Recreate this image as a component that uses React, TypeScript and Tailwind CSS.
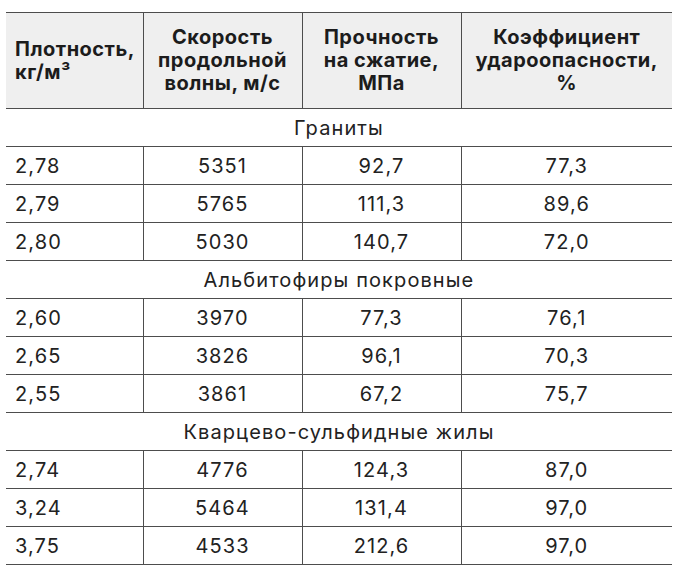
import React from 'react';

type Row = [string, string, string, string];

interface Section {
    title: string;
    rows: Row[];
}

const sections: Section[] = [
    {
        title: 'Граниты',
        rows: [
            ['2,78', '5351', '92,7', '77,3'],
            ['2,79', '5765', '111,3', '89,6'],
            ['2,80', '5030', '140,7', '72,0'],
        ],
    },
    {
        title: 'Альбитофиры покровные',
        rows: [
            ['2,60', '3970', '77,3', '76,1'],
            ['2,65', '3826', '96,1', '70,3'],
            ['2,55', '3861', '67,2', '75,7'],
        ],
    },
    {
        title: 'Кварцево-сульфидные жилы',
        rows: [
            ['2,74', '4776', '124,3', '87,0'],
            ['3,24', '5464', '131,4', '97,0'],
            ['3,75', '4533', '212,6', '97,0'],
        ],
    },
];

// inner grid lines only, no outer left/right edges
const cell = 'border-y border-x border-[#4d4d4d] h-[38px] p-0 align-middle';

const App: React.FC = () => {
    return (
        <div className="w-[679px] h-[569px] bg-white pt-3 px-[6px] font-['Inter','Noto_Sans',sans-serif] text-[#222222]">
            <table className="w-[666px] border-collapse table-fixed">
                <colgroup>
                    <col className="w-[137px]" />
                    <col className="w-[159px]" />
                    <col className="w-[159px]" />
                    <col className="w-[211px]" />
                </colgroup>
                <thead>
                    <tr className="bg-[#efefef] h-[96px] text-[20px] font-bold leading-[23px] tracking-[0.5px] text-[#1c1c1c]">
                        <th className="border border-l-0 border-[#4d4d4d] text-left pl-[9px] pr-0 align-middle">
                            Плотность,<br />кг/м³
                        </th>
                        <th className="border border-[#4d4d4d] text-center align-middle px-0">
                            Скорость<br />продольной<br />волны, м/с
                        </th>
                        <th className="border border-[#4d4d4d] text-center align-middle px-0">
                            Прочность<br />на сжатие,<br />МПа
                        </th>
                        <th className="border border-r-0 border-[#4d4d4d] text-center align-middle px-0">
                            Коэффициент<br />удароопасности,<br />%
                        </th>
                    </tr>
                </thead>
                <tbody className="text-[20px] tracking-[1.1px]">
                    {sections.map((s) => (
                        <React.Fragment key={s.title}>
                            <tr>
                                <td colSpan={4} className={`${cell} border-x-0 text-center`}>
                                    {s.title}
                                </td>
                            </tr>
                            {s.rows.map((r) => (
                                <tr key={r[0] + r[1]}>
                                    <td className={`${cell} border-l-0 text-left pl-[9px]`}>{r[0]}</td>
                                    <td className={`${cell} text-center`}>{r[1]}</td>
                                    <td className={`${cell} text-center`}>{r[2]}</td>
                                    <td className={`${cell} border-r-0 text-center`}>{r[3]}</td>
                                </tr>
                            ))}
                        </React.Fragment>
                    ))}
                </tbody>
            </table>
        </div>
    );
};

export default App;
